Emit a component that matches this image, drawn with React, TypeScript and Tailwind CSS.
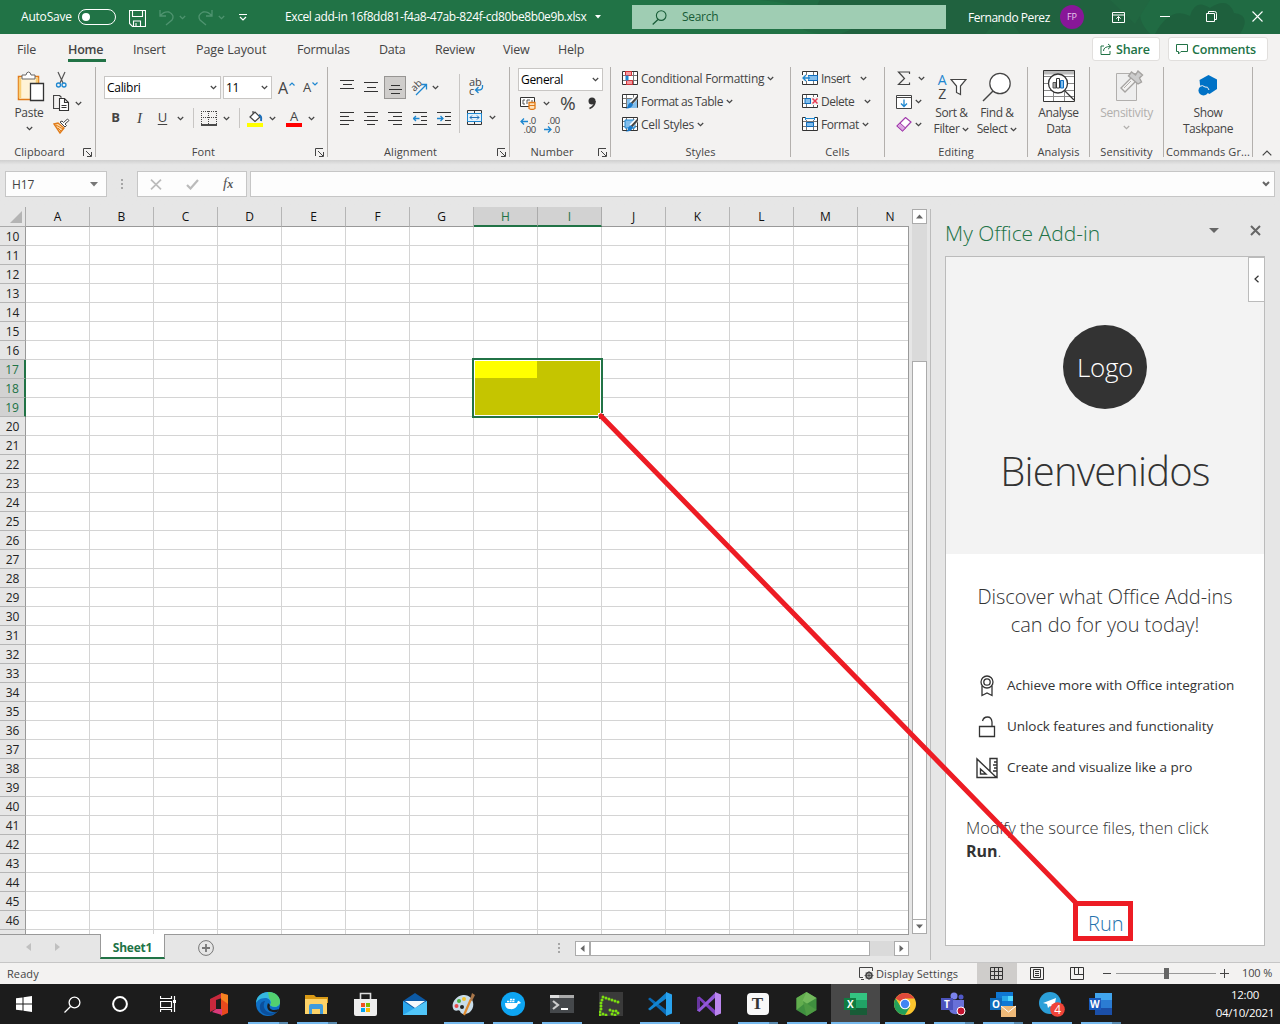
import React from "react";

type Kids = { children?: React.ReactNode; className?: string };

/* ---------- small shared drawings ---------- */
const Svg = ({ w, h, vb, className = "", children }: { w: number; h: number; vb?: string; className?: string; children?: React.ReactNode }) => (
  <svg width={w} height={h} viewBox={vb || `0 0 ${w} ${h}`} fill="none" className={`block shrink-0 ${className}`}>
    {children}
  </svg>
);
const Chev = ({ c = "#444", className = "" }: { c?: string; className?: string }) => (
  <Svg w={7} h={5} className={className}>
    <path d="M.8 1 3.5 3.7 6.2 1" stroke={c} strokeWidth="1.2" />
  </Svg>
);
const Launcher = () => (
  <Svg w={9} h={9}>
    <path d="M.5 8V.5H8M3 3l5 5M8.5 4v4.5H4" stroke="#444" />
  </Svg>
);
const Lines = ({ rows, children, className = "" }: { rows: [number, number, number][]; children?: React.ReactNode; className?: string }) => (
  <Svg w={15} h={15} className={className}>
    {rows.map(([x, y, l], i) => (
      <path key={i} d={`M${x} ${y + 0.5}h${l}`} stroke="#333" />
    ))}
    {children}
  </Svg>
);

/* ---------- title bar ---------- */
function TitleBar() {
  return (
    <header className="relative flex h-[34px] items-center overflow-hidden bg-[#217346] text-[12px] text-white">
      <svg className="absolute top-0 right-0" width="520" height="34" viewBox="0 0 520 34">
        <path d="M0 0h520v34H60Q30 30 45 18T0 0z" fill="#206b43" />
        <path d="M60 0h330q-20 12 0 34H80q30-10 0-16T60 0z" fill="#20623f" />
        <path d="M395 34q15-28 35-18 5-18 20-8 18-12 24 5 18 2 6 21z" fill="#1e603d" />
        <path d="M225 34l20-22 15 22zM350 0l25 24 15-24z" fill="#216741" />
      </svg>
      <div className="relative flex h-full w-full items-center">
        <span className="ml-[21px] w-[57px] text-[12px] tracking-[-0.2px]">AutoSave</span>
        <span className="flex h-4 w-[38px] items-center rounded-full border border-white pl-[3px]">
          <span className="size-2 rounded-full bg-white" />
        </span>
        <Svg w={17} h={17} className="mt-[2px] ml-[13px]">
          <path d="M.5.5h16v16h-13l-3-3zM3.5.5v6h10v-6M4.5 16v-5h7v5M7 13v3" stroke="#fff" strokeWidth="1.1" />
        </Svg>
        <Svg w={15} h={17} className="ml-[13px]">
          <path d="M1 1v6h6M1 7Q5 2 10 3q6 3 3 8l-6 5" stroke="#4f9470" strokeWidth="1.3" />
        </Svg>
        <Chev c="#4f9470" className="ml-[5px]" />
        <Svg w={15} h={17} className="ml-[12px]">
          <path d="M14 1v6H8M14 7Q10 2 5 3q-6 3-3 8l6 5" stroke="#4f9470" strokeWidth="1.3" />
        </Svg>
        <Chev c="#4f9470" className="ml-[5px]" />
        <Svg w={8} h={7} className="ml-[14px]">
          <path d="M0 .5h8M1 3l3 3 3-3" stroke="#fff" strokeWidth="1.2" />
        </Svg>
        <span className="ml-[38px] w-[311px] text-[12px] tracking-[-0.4px] whitespace-nowrap">Excel add-in 16f8dd81-f4a8-47ab-824f-cd80be8b0e9b.xlsx</span>
        <Svg w={6} h={4} className="-ml-px">
          <path d="M0 0h6L3 3.5z" fill="#fff" />
        </Svg>
        <div className="ml-[31px] flex h-6 w-[314px] items-center bg-[#9fcdb3] text-[#185c37]">
          <Svg w={15} h={15} className="ml-5">
            <path d="M6 9.5.7 14.5" stroke="#185c37" strokeWidth="1.2" />
            <circle cx="9.2" cy="5.6" r="4.8" stroke="#185c37" strokeWidth="1.1" />
          </Svg>
          <span className="ml-[15px] text-[12px] tracking-[-0.3px]">Search</span>
        </div>
        <span className="ml-[22px] w-[92px] pt-[2px] text-[12px] tracking-[-0.45px] whitespace-nowrap">Fernando Perez</span>
        <span className="flex size-6 items-center justify-center rounded-full bg-[#881798] text-[9px] text-[#e8c8ee]">FP</span>
        <Svg w={13} h={11} className="ml-[28px]">
          <path d="M.5.5h12v10H.5zM.5 3h12M6.5 9V4.5M4.3 6.7l2.2-2.2 2.2 2.2" stroke="#fff" />
        </Svg>
        <span className="-mt-[2px] ml-[35px] h-px w-[10px] bg-white" />
        <Svg w={11} h={11} className="-mt-[2px] ml-[36px]">
          <path d="M.5 2.5h8v8h-8zM2.5 2.5v-2h6q2 0 2 2v6h-2" stroke="#fff" />
        </Svg>
        <Svg w={11} h={11} className="-mt-[2px] ml-[35px]">
          <path d="m.5.5 10 10M10.5.5l-10 10" stroke="#fff" strokeWidth="1.1" />
        </Svg>
      </div>
    </header>
  );
}

/* ---------- ribbon tabs ---------- */
function Tabs() {
  return (
    <nav className="flex h-8 text-[12.5px] leading-[31px] tracking-[-0.2px] text-[#444]">
      <span className="ml-[17px] w-[51px]">File</span>
      <span className="w-[65px]">
        <span className="block h-[28px] w-[38px] border-b-[3px] border-[#217346] font-semibold tracking-[-0.2px]">Home</span>
      </span>
      <span className="w-[63px]">Insert</span>
      <span className="w-[101px] tracking-[-0.05px]">Page Layout</span>
      <span className="w-[82px]">Formulas</span>
      <span className="w-[56px]">Data</span>
      <span className="w-[68px]">Review</span>
      <span className="w-[55px]">View</span>
      <span className="w-[534px]">Help</span>
      <span className="mt-[3px] flex h-6 w-[68px] items-center rounded-[3px] border border-[#e1dfdd] bg-white pl-[7px] font-semibold tracking-[-0.2px] text-[#217346]">
        <Svg w={12} h={12}>
          <path d="M4 3H1v8.5h9V8M3.5 8q0-4.500 7-4.500M8 1l3 2.500-3 2.700" stroke="#217346" />
        </Svg>
        <span className="ml-1">Share</span>
      </span>
      <span className="mt-[3px] ml-2 flex h-6 w-[100px] items-center rounded-[3px] border border-[#e1dfdd] bg-white pl-[7px] font-semibold tracking-[-0.2px] text-[#217346]">
        <Svg w={12} h={11}>
          <path d="M.5.5h11v7H5l-2.500 2.500V7.500h-2z" stroke="#217346" />
        </Svg>
        <span className="ml-1">Comments</span>
      </span>
    </nav>
  );
}

/* ---------- ribbon ---------- */
function Group({ label, width, launcher, children }: { label: string; width: string; launcher?: boolean; children: React.ReactNode }) {
  return (
    <section className={`flex h-[90px] shrink-0 flex-col border-r border-[#b3b0ad] ${width}`}>
      <div className="flex h-[77px] shrink-0">{children}</div>
      <div className="flex h-[13px] items-center">
        <span className={`flex-1 pt-[4px] text-center text-[11px] tracking-[0.08px] whitespace-nowrap ${launcher ? "pr-1" : ""}`}>{label}</span>
        {launcher && (
          <span className="mt-[3px] mr-[3px] w-[9px]">
            <Launcher />
          </span>
        )}
      </div>
    </section>
  );
}
const Combo = ({ children, className = "" }: Kids) => (
  <div className={`flex items-center justify-between border border-[#c8c6c4] bg-white pr-[3px] pl-[2px] text-[12px] tracking-[-0.3px] text-black ${className}`}>
    <span className="pt-px">{children}</span>
    <Chev />
  </div>
);
const Grid16 = ({ children }: Kids) => (
  <Svg w={16} h={15}>
    <path d="M.5.5h15v13H.5z" fill="#fff" />
    <path d="M0 4.500h16M0 9.500h16M4.500 0v14M11.500 0v14" stroke="#777" />
    <path d="M.5.5h15v13H.5z" stroke="#333" />
    {children}
  </Svg>
);
const Brush = () => (
  <>
    <path d="M15 3 9 9" stroke="#fff" strokeWidth="4" />
    <path d="M15.500 3 9.500 9.500" stroke="#444" strokeWidth="2" />
    <path d="M9 8.500q-3 1-3 3.500-1 2-2.500 2.500 6 .5 7.500-4z" fill="#1979ca" />
  </>
);
function StyleRow({ icon, text, gap, track = "tracking-[-0.25px]" }: { icon: React.ReactNode; text: string; gap: string; track?: string }) {
  return (
    <div className="flex h-[23px] items-center text-[12px] whitespace-nowrap">
      {icon}
      <span className={`ml-[3px] pt-px ${track}`}>{text}</span>
      <Chev className={gap} />
    </div>
  );
}

function Ribbon() {
  return (
    <div className="flex h-[94px] pt-[1px] text-[#444]">
      <Group label="Clipboard" width="w-24" launcher>
        <div className="ml-[15px] flex w-7 flex-col items-center pt-[4px] text-[12px] tracking-[-0.3px]">
          <Svg w={28} h={32} className="ml-1">
            <path d="M1.500 5.500h20v23h-20z" fill="#fff3d6" stroke="#e07b1a" strokeWidth="1.500" />
            <path d="M3 7v20M20 7v5" stroke="#f9cf76" strokeWidth="2.500" />
            <path d="M5 8V4h4q.5-3 2.500-3T14 4h4v4z" fill="#fff" stroke="#666" />
            <path d="M13.500 12.500h13v17h-13z" fill="#fff" stroke="#333" strokeWidth="1.300" />
          </Svg>
          <span className="mt-px leading-[18px]">Paste</span>
          <Chev className="mt-[4px]" />
        </div>
        <div className="ml-[10px] flex flex-col">
          <Svg w={16} h={18} className="mt-[4px]">
            <path d="M5 1l5 11M12 1 7 12" stroke="#555" strokeWidth="1.200" />
            <circle cx="5.500" cy="14" r="2" stroke="#1e87d0" strokeWidth="1.300" />
            <circle cx="11" cy="14" r="2" stroke="#1e87d0" strokeWidth="1.300" />
          </Svg>
          <div className="mt-[6px] flex items-center">
            <Svg w={17} h={17}>
              <path d="M6 13.500H.5V.5h6l2 2" stroke="#444" strokeWidth="1.200" />
              <path d="M6.500 3.500h5l4 4v8h-9zM11.500 3.500v4h4M8.500 10.500h5M8.500 12.500h5" fill="#fff" stroke="#333" strokeWidth="1.100" />
            </Svg>
            <Chev className="ml-[5px]" />
          </div>
          <Svg w={17} h={16} className="mt-[6px]">
            <path d="m1 6 4-1 6 5-4 5z" fill="#fdd9a5" stroke="#e07b1a" strokeWidth="1.400" />
            <path d="m5 10 3 3M3 7l7 4" stroke="#e07b1a" />
            <path d="m7 4 5 5 1.500-1.500-1.500-1.500 4-3.500-1.500-1.500-4 3.500L9 3z" fill="#fff" stroke="#444" />
          </Svg>
        </div>
      </Group>

      <Group label="Font" width="w-[232px]" launcher>
        <div className="ml-2 flex flex-col">
          <div className="mt-[9px] flex h-[23px] items-center">
            <Combo className="h-[23px] w-[117px]">Calibri</Combo>
            <Combo className="ml-[2px] h-[23px] w-[49px]">11</Combo>
            <span className="ml-[6px] w-[10px] text-[16px] leading-none">A</span>
            <Svg w={6} h={4} className="-mt-2 ml-px">
              <path d="m.5 3.500 2.500-2.500 2.500 2.500" stroke="#1e87d0" strokeWidth="1.200" />
            </Svg>
            <span className="ml-[8px] w-[9px] text-[13px] leading-none">A</span>
            <Svg w={6} h={4} className="-mt-2">
              <path d="m.5.5 2.500 2.500 2.500-2.500" stroke="#1e87d0" strokeWidth="1.200" />
            </Svg>
          </div>
          <div className="mt-[8px] flex h-[22px] items-center text-[13px]">
            <b className="w-[23px] text-center">B</b>
            <i className="w-[25px] text-center font-['Liberation_Serif'] text-[15px]">I</i>
            <span className="w-[21px] text-center underline underline-offset-2">U</span>
            <Chev className="ml-1" />
            <span className="ml-[9px] h-5 w-px bg-[#c8c6c4]" />
            <Svg w={16} h={15} className="ml-[7px]">
              <path d="M.5 0v13M15.500 0v13M0 .5h16M0 6.500h16M7.500 0v13" stroke="#444" strokeDasharray="1 1" />
              <path d="M0 14h16" stroke="#111" strokeWidth="1.500" />
            </Svg>
            <Chev className="ml-[6px]" />
            <span className="ml-[9px] h-5 w-px bg-[#c8c6c4]" />
            <Svg w={17} h={17} className="ml-[7px]">
              <path d="m3 7 5-5 5 5-5 4.500zM6 4V1" fill="#fff" stroke="#444" strokeWidth="1.200" />
              <path d="M12 5q3 1 2 6" stroke="#1e6fb8" strokeWidth="2" />
              <path d="M0 13h16v4H0z" fill="#ff0" />
            </Svg>
            <Chev className="ml-[5px]" />
            <span className="ml-[10px] flex h-[18px] w-4 flex-col items-center border-b-4 border-[#f00] text-[13px] leading-[14px]">A</span>
            <Chev className="ml-[6px]" />
          </div>
        </div>
      </Group>

      <Group label="Alignment" width="w-[182px]" launcher>
        <div className="ml-3 flex w-[119px] flex-col">
          <div className="mt-[9px] flex h-[23px] items-center">
            <Lines className="-mt-1" rows={[[0, 2, 14], [3, 6, 9], [0, 10, 14]]} />
            <Lines className="ml-[9px]" rows={[[0, 2, 14], [3, 7, 9], [0, 11, 14]]} />
            <span className="ml-[5px] flex h-[23px] w-[22px] items-center justify-center border border-[#979593] bg-[#cfcdcb]">
              <Lines className="mt-1" rows={[[3, 3, 9], [1, 7, 13], [3, 11, 9]]} />
            </span>
            <span className="relative ml-[4px] flex h-[17px] w-[18px]">
              <Svg w={18} h={17}>
                <path d="m6 16 10-10M11.500 5.500h5v5" stroke="#1e87d0" strokeWidth="1.300" />
              </Svg>
              <span className="absolute top-0 left-0 -rotate-45 text-[10px] leading-[12px]">ab</span>
            </span>
            <Chev className="ml-[4px]" />
          </div>
          <div className="mt-[8px] flex h-[23px] items-center gap-[9px]">
            <Lines rows={[[0, 1, 14], [0, 5, 9], [0, 9, 14], [0, 13, 9]]} />
            <Lines rows={[[0, 1, 14], [3, 5, 8], [0, 9, 14], [3, 13, 8]]} />
            <Lines rows={[[0, 1, 14], [5, 5, 9], [0, 9, 14], [5, 13, 9]]} />
            <Lines className="ml-px" rows={[[0, 1, 14], [8, 5, 6], [8, 9, 6], [0, 13, 14]]}>
              <path d="M6.500 7.500h-6M3 5 .5 7.500 3 10" stroke="#1e87d0" strokeWidth="1.300" />
            </Lines>
            <Lines rows={[[0, 1, 14], [8, 5, 6], [8, 9, 6], [0, 13, 14]]}>
              <path d="M0 7.500h6M3.500 5 6 7.500 3.500 10" stroke="#1e87d0" strokeWidth="1.300" />
            </Lines>
          </div>
        </div>
        <span className="mt-[7px] h-[59px] w-px bg-[#c8c6c4]" />
        <div className="ml-[7px] flex flex-col">
          <div className="relative mt-[10px] ml-[2px] flex h-[19px] w-4 flex-col text-[11px] leading-[9px] tracking-[-0.2px]">
            <span className="h-[9px]">ab</span>
            <span className="h-[9px] w-[6px]">c</span>
            <Svg w={16} h={18} className="absolute top-0 left-0">
              <path d="M13.500 8v2q0 3-4 3H7m2.500-3L6.500 13l3 3" stroke="#1e87d0" strokeWidth="1.300" />
            </Svg>
          </div>
          <div className="mt-[14px] flex items-center">
            <Svg w={15} h={15}>
              <path d="M.5.5h14v14H.5zM7.500 0v4M7.500 11v4" stroke="#333" />
              <path d="M.5 3.500h14v8H.5z" fill="#e3f1fb" stroke="#1e87d0" />
              <path d="M3 7.500h9M5 5.500l-2 2 2 2M10 5.500l2 2-2 2" stroke="#1e6fb8" />
            </Svg>
            <Chev className="ml-[7px]" />
          </div>
        </div>
      </Group>

      <Group label="Number" width="w-[101px]" launcher>
        <div className="ml-[8px] flex flex-col">
          <Combo className="mt-px h-[23px] w-[85px]">General</Combo>
          <div className="mt-[3px] flex h-[18px] items-center">
            <Svg w={17} h={13} className="ml-[2px]">
              <path d="M.5.5h14v9H.5z" stroke="#333" fill="#fff" />
              <path d="M5 3H3v4h2M7 7V3h3M12 3v2" stroke="#555" />
              <path d="M9 5.500h6v6q-3 2-6 0z" fill="#ffe3bd" stroke="#e07b1a" strokeWidth="1.300" />
              <path d="M9 8.500h6" stroke="#e07b1a" />
            </Svg>
            <Chev className="ml-[6px]" />
            <span className="ml-[10px] w-[16px] text-[19px] leading-none">%</span>
            <Svg w={9} h={13} className="ml-[12px]">
              <circle cx="4" cy="4" r="3.500" fill="#333" />
              <path d="M7 4q0 5-5.500 7.500" stroke="#333" strokeWidth="1.600" />
            </Svg>
          </div>
          <div className="mt-[5px] flex text-[9.500px] leading-[8px] tracking-[-0.3px]">
            <div className="relative ml-[2px] flex h-[17px] w-[16px] flex-col items-end gap-px">
              <span>.0</span>
              <span>.00</span>
              <Svg w={9} h={8} className="absolute top-0 left-0">
                <path d="M8 4.500H1M4 1.500l-3 3 3 3" stroke="#1e87d0" strokeWidth="1.300" />
              </Svg>
            </div>
            <div className="relative ml-[8px] flex h-[17px] w-[16px] flex-col items-end gap-px">
              <span>.00</span>
              <span>.0</span>
              <Svg w={9} h={8} className="absolute bottom-0 left-0">
                <path d="M0 3.500h7M4 .5l3 3-3 3" stroke="#1e87d0" strokeWidth="1.300" />
              </Svg>
            </div>
          </div>
        </div>
      </Group>

      <Group label="Styles" width="w-[180px]">
        <div className="ml-[11px] flex flex-col">
          <StyleRow
            text="Conditional Formatting"
            gap="ml-[3px]"
            icon={
              <Grid16>
                <path d="M3.500.5h6v4h-6zM4.500 9.500h6v4h-6z" fill="#f69a9f" stroke="#d13438" />
                <path d="M3.500 4.500h3v5h-3z" fill="#1e87d0" />
              </Grid16>
            }
          />
          <StyleRow
            text="Format as Table"
            gap="ml-[3px]"
            track="tracking-[-0.5px]"
            icon={
              <Grid16>
                <path d="M5 5h10v9H5z" fill="#83beec" />
                <Brush />
              </Grid16>
            }
          />
          <StyleRow
            text="Cell Styles"
            gap="ml-[3px]"
            icon={
              <Grid16>
                <path d="M3 3h10v8H3z" fill="#83beec" stroke="#1e87d0" />
                <Brush />
              </Grid16>
            }
          />
        </div>
      </Group>

      <Group label="Cells" width="w-[94px]">
        <div className="ml-[11px] flex flex-col">
          <StyleRow
            text="Insert"
            gap="ml-[10px]"
            track="tracking-[-0.5px]"
            icon={
              <Grid16>
                <path d="M6 4.500h9.500v5H6z" fill="#83beec" stroke="#0f6cbd" />
                <path d="M0 4h6v6H0z" fill="#f3f2f1" />
                <path d="M8 7H1M4 4 1 7l3 3" stroke="#1e87d0" strokeWidth="1.300" />
              </Grid16>
            }
          />
          <StyleRow
            text="Delete"
            gap="ml-[10px]"
            track="tracking-[-0.5px]"
            icon={
              <Grid16>
                <path d="M9 3h7v8H9z" fill="#f3f2f1" />
                <path d="M3 4.500h5.500v5H3z" fill="#83beec" stroke="#0f6cbd" />
                <path d="m10.500 4.500 5 5M15.500 4.500l-5 5" stroke="#e8384f" strokeWidth="1.500" />
              </Grid16>
            }
          />
          <StyleRow
            text="Format"
            gap="ml-[3px]"
            track="tracking-[-0.4px]"
            icon={
              <Grid16>
                <path d="M3 0h9v3H3z" fill="#f3f2f1" />
                <path d="M3.500 0v3M12.500 0v3M4 1.500h8" stroke="#1e87d0" />
                <path d="M4.500 5.500h7v4h-7z" fill="#83beec" stroke="#0f6cbd" />
              </Grid16>
            }
          />
        </div>
      </Group>

      <Group label="Editing" width="w-[143px]">
        <div className="ml-[11px] flex w-[37px] flex-col">
          <div className="flex h-[23px] items-center">
            <Svg w={16} h={15}>
              <path d="M13.500 3V1H2.500l6 6.500-6 6h11v-2" stroke="#444" strokeWidth="1.200" />
            </Svg>
            <Chev className="ml-[6px]" />
          </div>
          <div className="flex h-[23px] items-center">
            <Svg w={16} h={14}>
              <path d="M.5.5h15v13H.5zM.5 2.500h15" fill="#fff" stroke="#444" />
              <path d="M8 4.500V11M5 8.500l3 3 3-3" stroke="#1e87d0" strokeWidth="1.300" />
            </Svg>
            <Chev className="ml-[3px]" />
          </div>
          <div className="flex h-[23px] items-center">
            <Svg w={16} h={15}>
              <path d="m1 9 8.500-8.500L15 5l-8.500 9z" fill="#fff" stroke="#a23cad" strokeWidth="1.200" />
              <path d="m1 9 3-3 5.500 5-3 3z" fill="#dba6e0" stroke="#a23cad" />
            </Svg>
            <Chev className="ml-[3px]" />
          </div>
        </div>
        <div className="flex w-[37px] flex-col items-center text-[12px] leading-[16px] tracking-[-0.4px] whitespace-nowrap">
          <div className="mt-[5px] flex h-[29px] w-[30px] items-center">
            <div className="flex w-[11px] flex-col text-center text-[14px] leading-[14px]">
              <span className="text-[#1e87d0]">A</span>
              <span>Z</span>
            </div>
            <Svg w={17} h={18} className="ml-[2px]">
              <path d="M1 1.500h15L10.500 8v8.500l-4-2V8z" fill="#fff" stroke="#444" strokeWidth="1.200" />
            </Svg>
          </div>
          <span className="mt-[4px]">Sort &amp;</span>
          <span className="flex items-center gap-[3px]">
            Filter <Chev />
          </span>
        </div>
        <div className="ml-[7px] flex w-[40px] flex-col items-center text-[12px] leading-[16px] tracking-[-0.4px] whitespace-nowrap">
          <Svg w={30} h={31} className="mt-[5px]">
            <path d="M11 19 1 29" stroke="#444" strokeWidth="1.400" />
            <circle cx="18" cy="11.500" r="10.200" fill="#fff" stroke="#444" strokeWidth="1.200" />
          </Svg>
          <span className="mt-[2px]">Find &amp;</span>
          <span className="flex items-center gap-[3px]">
            Select <Chev />
          </span>
        </div>
      </Group>

      <Group label="Analysis" width="w-[62px]">
        <div className="flex w-full flex-col items-center text-[12px] leading-[16px] tracking-[-0.4px]">
          <Svg w={32} h={32} className="mt-[3px]">
            <path d="M.5.5h31v31H.5z" fill="#fff" />
            <path d="M0 2.500h32" stroke="#bbb" strokeWidth="4" />
            <path d="M0 6.500h32M0 13.500h32M0 20.500h32M0 26.500h32M10.500 20v12M21.500 20v12" stroke="#888" />
            <path d="M.5.5h31v31H.5z" stroke="#333" />
            <circle cx="15" cy="13.500" r="9.500" fill="#fff" stroke="#333" strokeWidth="1.300" />
            <path d="m22 21 9 9" stroke="#333" strokeWidth="1.300" />
            <path d="M10 12.500h3V18h-3z" fill="#aaa" stroke="#555" />
            <path d="M13.500 8.500h3V18h-3z" fill="#fff" stroke="#333" />
            <path d="M17.500 10.500h3V18h-3z" fill="#83beec" stroke="#0f6cbd" />
          </Svg>
          <span className="mt-[3px]">Analyse</span>
          <span>Data</span>
        </div>
      </Group>

      <Group label="Sensitivity" width="w-[74px]">
        <div className="flex w-full flex-col items-center text-[12px] leading-[16px] tracking-[-0.3px] text-[#b1afad]">
          <Svg w={28} h={32} className="mt-[3px] ml-[6px]">
            <path d="M.5 3.500h20v27H.5z" fill="#eee" stroke="#b1afad" />
            <path d="M16 7 5 18l4 4 11-11z" fill="#f3f2f1" stroke="#a5a3a1" strokeWidth="1.400" />
            <path d="m8 18 7-7" stroke="#b1afad" />
            <path d="m12.500 6 3-4 4 3 2.500-4 4.500 4-3 3 2 4-3.500 2z" fill="#ccc" stroke="#a5a3a1" strokeWidth="1.400" />
          </Svg>
          <span className="mt-[3px]">Sensitivity</span>
          <Chev c="#b1afad" className="mt-[4px]" />
        </div>
      </Group>

      <Group label="Commands Gr..." width="w-[89px]">
        <div className="flex w-full flex-col items-center text-[12px] leading-[16px] tracking-[-0.4px]">
          <Svg w={19} h={21} className="mt-[8px] mr-[2px]">
            <path d="m10.500 0 8.500 4.500v9.500l-7.500 5-9-5-1-9z" fill="#0072c6" />
            <circle cx="5.500" cy="15.500" r="5" fill="#0072c6" />
            <path d="M1 11.500q4-2 6 .5 3-1 4 3" stroke="#f3f2f1" />
          </Svg>
          <span className="mt-[9px]">Show</span>
          <span>Taskpane</span>
        </div>
      </Group>
      <div className="flex items-end pb-[4px] pl-[9px]">
        <Svg w={10} h={6}>
          <path d="m.7 5.300 4.300-4.300 4.300 4.300" stroke="#444" strokeWidth="1.200" />
        </Svg>
      </div>
    </div>
  );
}

/* ---------- formula bar ---------- */
const Dots = ({ className = "" }: Kids) => (
  <span className={`flex flex-col gap-[2px] ${className}`}>
    <i className="size-[2px] bg-[#a6a6a6]" />
    <i className="size-[2px] bg-[#a6a6a6]" />
    <i className="size-[2px] bg-[#a6a6a6]" />
  </span>
);
function FormulaBar() {
  return (
    <div className="flex h-[47px] bg-gradient-to-b from-[#cfcfcf] via-[#e6e6e6] via-10% to-[#e6e6e6] pt-[11px]">
      <div className="ml-[5px] flex h-[26px] w-[102px] items-center justify-between border border-[#c6c6c6] bg-[#fdfdfd] pr-[8px] pl-[6px] text-[12px] tracking-[-0.1px] text-[#444]">
        <span className="pt-px">H17</span>
        <Svg w={8} h={5}>
          <path d="M0 0h8L4 4.500z" fill="#777" />
        </Svg>
      </div>
      <Dots className="mt-[8px] ml-[14px] w-[2px]" />
      <div className="ml-[14px] flex h-[26px] w-[110px] items-center border border-[#c6c6c6] bg-[#fdfdfd]">
        <Svg w={12} h={11} className="ml-[12px]">
          <path d="m1 .7 10 9.600M11 .7 1 10.300" stroke="#bbb" strokeWidth="1.700" />
        </Svg>
        <Svg w={13} h={11} className="ml-6">
          <path d="m1 6 3.500 3.500L12 1" stroke="#bbb" strokeWidth="2.200" />
        </Svg>
        <span className="-mt-[2px] ml-[24px] font-['Liberation_Serif'] text-[15px] text-[#555] italic">
          f<span className="text-[12px] font-bold">x</span>
        </span>
      </div>
      <div className="ml-[3px] flex h-[26px] w-[1025px] items-center justify-end border border-[#c6c6c6] bg-[#fdfdfd] pr-1">
        <Svg w={8} h={6}>
          <path d="m1 1 3 3 3-3" stroke="#666" strokeWidth="2" />
        </Svg>
      </div>
    </div>
  );
}

/* ---------- worksheet ---------- */
const COLS = "ABCDEFGHIJKLMN".split("");
const ROWS = Array.from({ length: 37 }, (_, i) => i + 10);

function Sheet() {
  return (
    <div className="w-[909px] shrink-0">
      <div className="flex h-5 text-[12px] leading-[19px] text-[#111]">
        <div className="flex w-[26px] items-end justify-end border-r border-b border-[#aaa] pr-[3px] pb-[3px]">
          <Svg w={12} h={12}>
            <path d="M12 0v12H0z" fill="#b4b4b4" />
          </Svg>
        </div>
        {COLS.map((c) => (
          <div
            key={c}
            className={`shrink-0 text-center ${
              c === "N"
                ? "w-[51px] border-b border-[#999] pl-[13px]"
                : c === "H" || c === "I"
                  ? "w-16 border-r border-b-2 border-r-[#ababab] border-b-[#217346] bg-[#d2d2d2] text-[#217346]"
                  : "w-16 border-r border-b border-r-[#b5b5b5] border-b-[#999]"
            }`}
          >
            {c}
          </div>
        ))}
      </div>
      <div className="flex h-[707px] overflow-hidden">
        <div className="w-[26px] shrink-0 text-[12px] leading-[20px] tracking-[-0.1px] text-[#222]">
          {ROWS.map((r) => (
            <div
              key={r}
              className={`h-[19px] border-b border-b-[#b5b5b5] text-center ${
                r >= 17 && r <= 19 ? "border-r-2 border-r-[#217346] bg-[#d2d2d2] text-[#217346]" : "border-r border-r-[#999]"
              }`}
            >
              {r}
            </div>
          ))}
          <div className="h-1 border-r border-[#999]" />
        </div>
        <div className="relative w-[883px] overflow-hidden border-r border-[#999] bg-white">
          {[...ROWS, 47].map((r) => (
            <div key={r} className="flex h-[19px]">
              {COLS.map((c) => (
                <div key={c} className="w-16 shrink-0 border-r border-b border-[#d4d4d4]" />
              ))}
            </div>
          ))}
          <div className="absolute top-[131px] left-[446px] h-[60px] w-[131px] border-2 border-[#217346] bg-white p-px">
            <div className="h-full w-full bg-[#c5c500]">
              <div className="h-[17px] w-[62px] bg-[#ff0]" />
            </div>
            <div className="absolute -right-[3px] -bottom-[3px] size-[6px] border-t border-l border-white bg-[#217346]" />
          </div>
        </div>
      </div>
    </div>
  );
}

const Arrow = ({ d }: { d: string }) => (
  <Svg w={7} h={7}>
    <path d={d} fill="#666" />
  </Svg>
);
function VScroll() {
  return (
    <div className="mt-[2px] ml-[3px] flex h-[725px] w-[15px] shrink-0 flex-col">
      <div className="flex h-[15px] items-center justify-center border border-[#ababab] bg-white">
        <Arrow d="M0 5.500h7L3.500 1.500z" />
      </div>
      <div className="h-[137px] bg-[#dadada]" />
      <div className="h-[559px] border border-[#ababab] bg-white" />
      <div className="flex h-[14px] items-center justify-center border border-t-0 border-[#ababab] bg-white">
        <Arrow d="M0 1.500h7L3.500 5.500z" />
      </div>
    </div>
  );
}

function SheetTabs() {
  return (
    <div className="flex h-[28px] w-[927px]">
      <div className="flex w-[909px] border-t border-[#999]">
        <Svg w={5} h={8} className="mt-[8px] ml-[26px]">
          <path d="M5 0v8L0 4z" fill="#c0c0c0" />
        </Svg>
        <Svg w={5} h={8} className="mt-[8px] ml-[24px]">
          <path d="M0 0v8l5-4z" fill="#c0c0c0" />
        </Svg>
        <div className="-mt-px ml-[40px] h-[25px] w-[65px] border-x border-b-2 border-x-[#999] border-b-[#217346] bg-white text-center text-[12px] leading-[27px] font-bold tracking-[-0.2px] text-[#217346]">
          Sheet1
        </div>
        <Svg w={16} h={16} className="mt-[5px] ml-[33px]">
          <circle cx="8" cy="8" r="7.400" stroke="#777" />
          <path d="M8 4v8M4 8h8" stroke="#777" strokeWidth="1.800" />
        </Svg>
        <Dots className="mt-[8px] ml-[344px] w-[2px]" />
        <div className="mt-[6px] ml-[15px] flex h-[15px] w-[334px]">
          <div className="flex w-[15px] items-center justify-center border border-[#ababab] bg-white">
            <Arrow d="M5.500 0v7L1.500 3.500z" />
          </div>
          <div className="w-[280px] border border-[#ababab] bg-white" />
          <div className="flex-1 bg-[#dadada]" />
          <div className="flex w-[15px] items-center justify-center border border-[#ababab] bg-white">
            <Arrow d="M1.500 0v7l4-3.500z" />
          </div>
        </div>
      </div>
    </div>
  );
}

/* ---------- add-in pane ---------- */
function TaskPane() {
  return (
    <aside className="mt-[2px] ml-[3px] flex h-[751px] flex-1 flex-col border-l border-[#bbb] pl-[14px] font-light">
      <div className="flex h-[47px] items-center text-[21px] text-[#217346]">
        <span className="w-[264px] pt-[2px] whitespace-nowrap">My Office Add-in</span>
        <Svg w={10} h={5} className="-mt-[5px]">
          <path d="M0 0h10L5 5z" fill="#666" />
        </Svg>
        <Svg w={11} h={11} className="-mt-[5px] ml-[31px]">
          <path d="m1 1 9 9M10 1l-9 9" stroke="#666" strokeWidth="2" />
        </Svg>
      </div>
      <div className="relative flex h-[690px] w-[320px] flex-col border border-[#bbb] bg-white text-[#333]">
        <div className="absolute top-0 right-0 flex h-[45px] w-[16px] items-center justify-center border border-r-0 border-[#bbb] bg-white">
          <Svg w={5} h={8} className="-mt-[2px]">
            <path d="M4.500.7 1 4l3.500 3.300" stroke="#333" strokeWidth="1.200" />
          </Svg>
        </div>
        <div className="flex h-[297px] flex-col items-center bg-[#f3f3f3] pt-[68px]">
          <div className="flex size-[84px] items-center justify-center rounded-full bg-[#333] text-[26px] tracking-[-0.3px] text-white">Logo</div>
          <h1 className="mt-[34px] text-[40px] leading-[56px] tracking-[-0.85px]">Bienvenidos</h1>
        </div>
        <p className="mt-[29px] text-center text-[20px] leading-[28px] tracking-[-0.05px] whitespace-nowrap">
          Discover what Office Add-ins
          <br />
          can do for you today!
        </p>
        <ul className="mt-[26px] ml-[30px] text-[13.500px] leading-[41px] font-normal tracking-[-0.06px]">
          <li className="flex items-center">
            <Svg w={22} h={22}>
              <circle cx="11" cy="7" r="6" stroke="#333" strokeWidth="1.300" />
              <circle cx="11" cy="7" r="3.200" stroke="#333" strokeWidth="1.300" />
              <path d="M6 11v9.500l5-2.500 5 2.500V11" stroke="#333" strokeWidth="1.300" />
            </Svg>
            <span className="ml-[9px]">Achieve more with Office integration</span>
          </li>
          <li className="flex items-center">
            <Svg w={22} h={22}>
              <path d="M3.500 10.500h15v10h-15zM6.500 5q1-4 5-4t4.500 5v4.500" stroke="#333" strokeWidth="1.300" />
            </Svg>
            <span className="ml-[9px]">Unlock features and functionality</span>
          </li>
          <li className="flex items-center">
            <Svg w={22} h={22}>
              <path d="M1 2v18.500h19.500zM14 14V1.500h7v19h-1M4.500 12v5h5.500zM18 5h3M17 8h4M18 11h3M17 14h4" stroke="#333" strokeWidth="1.400" />
            </Svg>
            <span className="ml-[9px]">Create and visualize like a pro</span>
          </li>
        </ul>
        <p className="mt-[28px] ml-[20px] text-[16.500px] leading-[23px] tracking-[-0.05px] whitespace-nowrap">
          Modify the source files, then click
          <br />
          <b className="text-[16px] font-bold">Run</b>.
        </p>
        <div className="mt-[45px] pl-[142px] text-[20px] leading-[32px] text-[#2372ad]">Run</div>
      </div>
    </aside>
  );
}

/* ---------- status bar ---------- */
function StatusBar() {
  return (
    <div className="flex h-[22px] items-center border-t border-[#c6c6c6] bg-[#f3f2f1] text-[11px] tracking-[0.08px] text-[#444]">
      <span className="ml-[7px] w-[852px] pt-[2px]">Ready</span>
      <Svg w={15} h={13}>
        <path d="M4 10.500H.5V.5h13V4M2 12.500h3" stroke="#444" />
        <circle cx="10" cy="8.500" r="3" stroke="#444" strokeWidth="1.500" />
        <path d="M10 4v9M5.500 8.500h9M7 5.500l6 6M13 5.500l-6 6" stroke="#444" strokeWidth=".8" />
      </Svg>
      <span className="ml-[2px] w-[101px] pt-[2px] whitespace-nowrap">Display Settings</span>
      <span className="flex h-full w-10 items-center justify-center bg-[#cfcdcb] pr-px">
        <Svg w={13} h={13}>
          <path d="M.5.5h12v12H.5zM.5 4.500h12M.5 8.500h12M4.500.5v12M8.500.5v12" stroke="#333" />
        </Svg>
      </span>
      <Svg w={14} h={13} className="ml-[13px]">
        <path d="M.5.5h13v12H.5zM3.500 2.500h7v8h-7zM5 4.500h4M5 6.500h4M5 8.500h4" stroke="#333" />
      </Svg>
      <Svg w={14} h={13} className="ml-[26px]">
        <path d="M.5.5h13v12H.5zM4.500.5v7h4v-7M8.500 7.500h5" stroke="#333" />
      </Svg>
      <span className="ml-[19px] h-px w-2 bg-[#444]" />
      <span className="relative ml-[5px] h-px w-[100px] bg-[#999]">
        <i className="absolute -top-[5px] left-[48px] h-[11px] w-[5px] bg-[#666]" />
      </span>
      <Svg w={9} h={9} className="ml-[4px]">
        <path d="M4.500 0v9M0 4.500h9" stroke="#444" />
      </Svg>
      <span className="ml-[13px] tracking-[-0.15px] whitespace-nowrap">100 %</span>
    </div>
  );
}

/* ---------- taskbar ---------- */
const MSTile = ({ bg, x, letter }: { bg: string[]; x?: number; letter: string }) => (
  <Svg w={24} h={24}>
    <path d="M6 1h17v7H6z" fill={bg[0]} />
    <path d="M6 8h17v8H6z" fill={bg[1]} />
    <path d="M6 16h17v7H6z" fill={bg[2]} />
    <path d="M0 6h12v12H0z" fill={bg[3]} />
    <text x={x ?? 2.5} y="15.500" fontSize="10" fontWeight="700" fill="#fff">{letter}</text>
  </Svg>
);

const APPS: { id: string; bar?: 0 | 1 | 2; icon: React.ReactNode }[] = [
  { id: "office", icon: (
    <Svg w={20} h={23}>
      <path d="m1 6 12-6v5L7 7v9l-6 3z" fill="#c8283c" />
      <path d="m12 0 7 2v18l-7 3z" fill="#e8491d" />
      <path d="m12 0 7 2v9l-7-5z" fill="#f58220" />
      <path d="m3 19 4-3h6v6z" fill="#d9397a" />
    </Svg>) },
  { id: "edge", bar: 2, icon: (
    <Svg w={24} h={24}>
      <circle cx="12" cy="12" r="12" fill="#0f6fc5" />
      <path d="M0 11C1-4 24-3 24 10c0 6-8 6-10 3 2-4-1-7-5-7-5 0-8 3-9 5z" fill="#35b8e0" />
      <path d="M12 0c8 0 12 5 12 10s-7 6-10 3c2-2 1-5-1-7z" fill="#53d06f" />
      <path d="M9 9c-4 7 2 14 12 11-5 5-15 4-17-3-1-5 2-8 5-8z" fill="#0b4f9c" />
      <path d="M14 13c-2 5 4 6 9 4l-2 3c-6 1-12-2-9-9z" fill="#1c1c1c" />
    </Svg>) },
  { id: "files", bar: 2, icon: (
    <Svg w={23} h={21}>
      <path d="M0 1h9l2 2h12v6H0z" fill="#d99a16" />
      <path d="M0 5h22v15H0z" fill="#fdd267" />
      <path d="M4 20v-8q0-2 2-2h10q2 0 2 2v8h-3v-5H7v5z" fill="#3f9bdc" />
    </Svg>) },
  { id: "store", icon: (
    <Svg w={23} h={25}>
      <path d="M6.500 8V1.500h10V8" stroke="#ddd" strokeWidth="1.600" />
      <path d="M0 7h23v15q0 2-2 2H2q-2 0-2-2z" fill="#eee" />
      <path d="M7 11h4v4H7z" fill="#f25022" /><path d="M12 11h4v4h-4z" fill="#7fba00" />
      <path d="M7 16h4v4H7z" fill="#00a4ef" /><path d="M12 16h4v4h-4z" fill="#ffb900" />
    </Svg>) },
  { id: "mail", icon: (
    <Svg w={24} h={23}>
      <path d="M0 8 12 0l12 8v14H0z" fill="#0c59a4" />
      <path d="M0 8v14h24V8l-12 8z" fill="#2aa6ec" />
      <path d="M0 22 17 12l7-4v14z" fill="#50c5f8" />
      <path d="M2 8h20l-10 7z" fill="#f5f9fc" />
    </Svg>) },
  { id: "paint", bar: 1, icon: (
    <Svg w={24} h={23}>
      <path d="M11 2C3 3-2 12 2 17c3 2 4-1 6 1 1 4 6 4 10 1 7-7 2-18-7-17z" fill="#c8dce9" />
      <circle cx="4.500" cy="13" r="2" fill="#e84a4a" /><circle cx="7" cy="8" r="2" fill="#4cae3f" />
      <circle cx="12" cy="6" r="2" fill="#f2c230" /><circle cx="10" cy="14" r="2" fill="#222" />
      <path d="m12 22 7-16" stroke="#e08a2e" strokeWidth="2.200" /><path d="m18 7 2-7 3 2-3 6z" fill="#a87548" />
    </Svg>) },
  { id: "docker", bar: 1, icon: (
    <Svg w={24} h={24}>
      <circle cx="12" cy="12" r="12" fill="#0ea5f2" />
      <path d="M4 11h12q1-3 2-2l2 2q-2 1-3 1-2 6-8 5-5 0-5-6z" fill="#fff" />
      <path d="M6 9.500h8M9 7.500h5" stroke="#fff" strokeWidth="1.600" strokeDasharray="2 .6" />
    </Svg>) },
  { id: "terminal", bar: 1, icon: (
    <Svg w={24} h={20}>
      <path d="M0 1h24v18H0z" fill="#45484b" /><path d="M0 1h24v3H0z" fill="#aaa" /><path d="M0 1h9v3H0z" fill="#ddd" />
      <path d="m3 7 5 4-5 4" stroke="#ccc" strokeWidth="2.200" /><path d="M11 15h7" stroke="#fff" strokeWidth="2" />
    </Svg>) },
  { id: "green", icon: (
    <Svg w={24} h={24}>
      <path d="M0 0h24v24H0z" fill="#3a3a3a" />
      {[[19, 10], [16, 9], [13, 8], [10, 7], [7, 6], [4, 5], [3, 8], [2, 11], [2, 14], [2, 17], [1, 20], [1, 23], [4, 22], [7, 23], [11, 18], [14, 19], [17, 19], [13, 22], [16, 23], [19, 21]].map(([x, y], i) => (
        <circle key={i} cx={x} cy={y} r="1.500" fill="#7be010" />
      ))}
    </Svg>) },
  { id: "vscode", bar: 1, icon: (
    <Svg w={24} h={24}>
      <path d="m0 7 2-1.500 17 13V24z" fill="#0a69b4" /><path d="m0 17 2 1.500L19 6V0z" fill="#1385d1" />
      <path d="m18 0 6 2.500v19L18 24z" fill="#29a3ee" />
    </Svg>) },
  { id: "vs", icon: (
    <Svg w={24} h={24}>
      <path d="M0 5.500 2.500 4.500 19 19v5z" fill="#7c3fbf" /><path d="M0 5.500v13l3 1V8z" fill="#66349c" />
      <path d="M0 18.500 2.500 20 19 5V0z" fill="#9259d9" /><path d="m18 0 6 2.500v19L18 24z" fill="#bb86ee" />
    </Svg>) },
  { id: "typora", bar: 2, icon: (
    <span className="flex size-[22px] items-center justify-center rounded-[4px] bg-[#f8f8f8] font-['Liberation_Serif'] text-[17px] font-bold text-[#333]">T</span>) },
  { id: "mongo", bar: 1, icon: (
    <Svg w={21} h={24}>
      <path d="m10.500 0 10 6v12l-10 6-10-6V6z" fill="#3f8f3f" /><path d="M10.500 0v10L.5 18V6z" fill="#62ad4e" />
      <path d="m10.500 0 10 6-10 6-4-3z" fill="#73b95d" /><path d="m7 9 13.500 9-10 6z" fill="#4d9a43" />
    </Svg>) },
  { id: "excel", bar: 1, icon: <MSTile bg={["#33c481", "#21a366", "#185c37", "#107c41"]} letter="X" x={3} /> },
  { id: "chrome", bar: 1, icon: (
    <Svg w={22} h={22}>
      <circle cx="11" cy="11" r="11" fill="#fbc52d" />
      <path d="M11 11 1.500 5.500A11 11 0 0 1 20.500 5.500H11z" fill="#df4a3c" />
      <path d="M1.500 5.500A11 11 0 0 0 11 22l5-8-9 0z" fill="#23a05a" />
      <circle cx="11" cy="11" r="5.300" fill="#fff" /><circle cx="11" cy="11" r="4.200" fill="#4285f4" />
    </Svg>) },
  { id: "teams", bar: 2, icon: (
    <Svg w={25} h={24}>
      <circle cx="13" cy="4" r="3.500" fill="#7b83eb" /><circle cx="20" cy="5" r="2.500" fill="#5059c9" />
      <path d="M8 8h15v9q-4 6-10 5-5-1-5-6z" fill="#6870d8" />
      <path d="M0 6h12v12H0z" fill="#4b53bc" /><text x="3" y="15.500" fontSize="10" fontWeight="700" fill="#fff">T</text>
      <circle cx="20" cy="19" r="4" fill="#c4122f" stroke="#fff" />
    </Svg>) },
  { id: "outlook", bar: 2, icon: (
    <Svg w={26} h={25}>
      <path d="M6 0h17v16H6z" fill="#0f78d4" /><path d="M12 4h6v5h-6z" fill="#28a8ea" /><path d="M18 4h5v5h-5z" fill="#50d9ff" />
      <path d="M0 6h12v12H0z" fill="#0f6cbd" /><text x="2" y="15.500" fontSize="10" fontWeight="700" fill="#fff">O</text>
      <path d="M11 14h15v11H11z" fill="#eeb978" /><path d="m11 14 7.500 6 7.500-6" stroke="#fff" />
    </Svg>) },
  { id: "telegram", bar: 1, icon: (
    <Svg w={26} h={26}>
      <circle cx="11" cy="12" r="11" fill="#2b9fd9" /><path d="m4 12 13-5-2 11-4-3-2 2-1-4z" fill="#fff" />
      <circle cx="18.500" cy="18.500" r="7.300" fill="#f04438" /><text x="15.300" y="23" fontSize="12" fill="#fff">4</text>
    </Svg>) },
  { id: "word", bar: 2, icon: <MSTile bg={["#41a5ee", "#2b7cd3", "#1b4fa8", "#185abd"]} letter="W" x={1} /> },
];

function Taskbar() {
  return (
    <footer className="flex h-10 bg-[#1c1c1c] text-white">
      <span className="flex w-12 items-center justify-center">
        <Svg w={16} h={16}>
          <path d="m0 2.300 6.500-.9v6.100H0zM7.500 1.200 16 0v7.500H7.500zM0 8.500h6.500v6.100L0 13.700zM7.500 8.500H16V16l-8.500-1.200z" fill="#fff" />
        </Svg>
      </span>
      <span className="flex w-12 items-center justify-center">
        <Svg w={17} h={17}>
          <circle cx="10.500" cy="6.500" r="5.400" stroke="#fff" strokeWidth="1.300" />
          <path d="m6.500 10.500-6 6" stroke="#fff" strokeWidth="1.300" />
        </Svg>
      </span>
      <span className="flex w-12 items-center justify-center">
        <Svg w={16} h={16}>
          <circle cx="8" cy="8" r="6.900" stroke="#fff" strokeWidth="2" />
        </Svg>
      </span>
      <span className="flex w-12 items-center justify-center">
        <Svg w={17} h={16}>
          <path d="M.5 0v2.500h11V0M.5 5.500h11v6H.5zM.5 16v-2.500h11V16M14.500 0v16" stroke="#fff" strokeWidth="1.200" />
          <path d="M13 4h3v3h-3z" fill="#fff" />
        </Svg>
      </span>
      <div className="ml-[2px] flex w-[931px]">
        {APPS.map((a) => (
          <span key={a.id} className={`flex h-10 w-[49px] flex-col items-center ${a.id === "excel" ? "bg-[#484848]" : ""}`}>
            <span className="flex h-[38px] items-center pt-[2px]">{a.icon}</span>
            {a.bar && (
              <span className={`flex h-[2px] ${a.id === "excel" ? "w-full" : "w-10"}`}>
                <i className="flex-1 bg-[#76b9ed]" />
                {a.bar === 2 && <i className="w-[9px] bg-[#5788ad]" />}
              </span>
            )}
          </span>
        ))}
      </div>
      <div className="flex-1 pt-[2px] text-center text-[11.500px] leading-[18px] tracking-[-0.25px]">
        <div className="pl-[85px]">12:00</div>
        <div className="pl-[85px]">04/10/2021</div>
      </div>
    </footer>
  );
}

export default function App() {
  return (
    <div className="relative h-[1024px] w-[1280px] overflow-hidden bg-[#e6e6e6] font-['Open_Sans','Noto_Sans',sans-serif]">
      <TitleBar />
      <div className="bg-[#f3f2f1]">
        <Tabs />
        <Ribbon />
      </div>
      <FormulaBar />
      <main className="flex h-[755px]">
        <div className="w-[927px] shrink-0">
          <div className="flex h-[727px]">
            <Sheet />
            <VScroll />
          </div>
          <SheetTabs />
        </div>
        <TaskPane />
      </main>
      <StatusBar />
      <Taskbar />
      <svg className="pointer-events-none absolute inset-0" width="1280" height="1024" fill="none" stroke="#ed1c24" strokeWidth="5">
        <path d="M601 416 1077 904" strokeLinecap="round" />
        <path d="M1075.500 903.500h55v35h-55z" />
      </svg>
    </div>
  );
}
